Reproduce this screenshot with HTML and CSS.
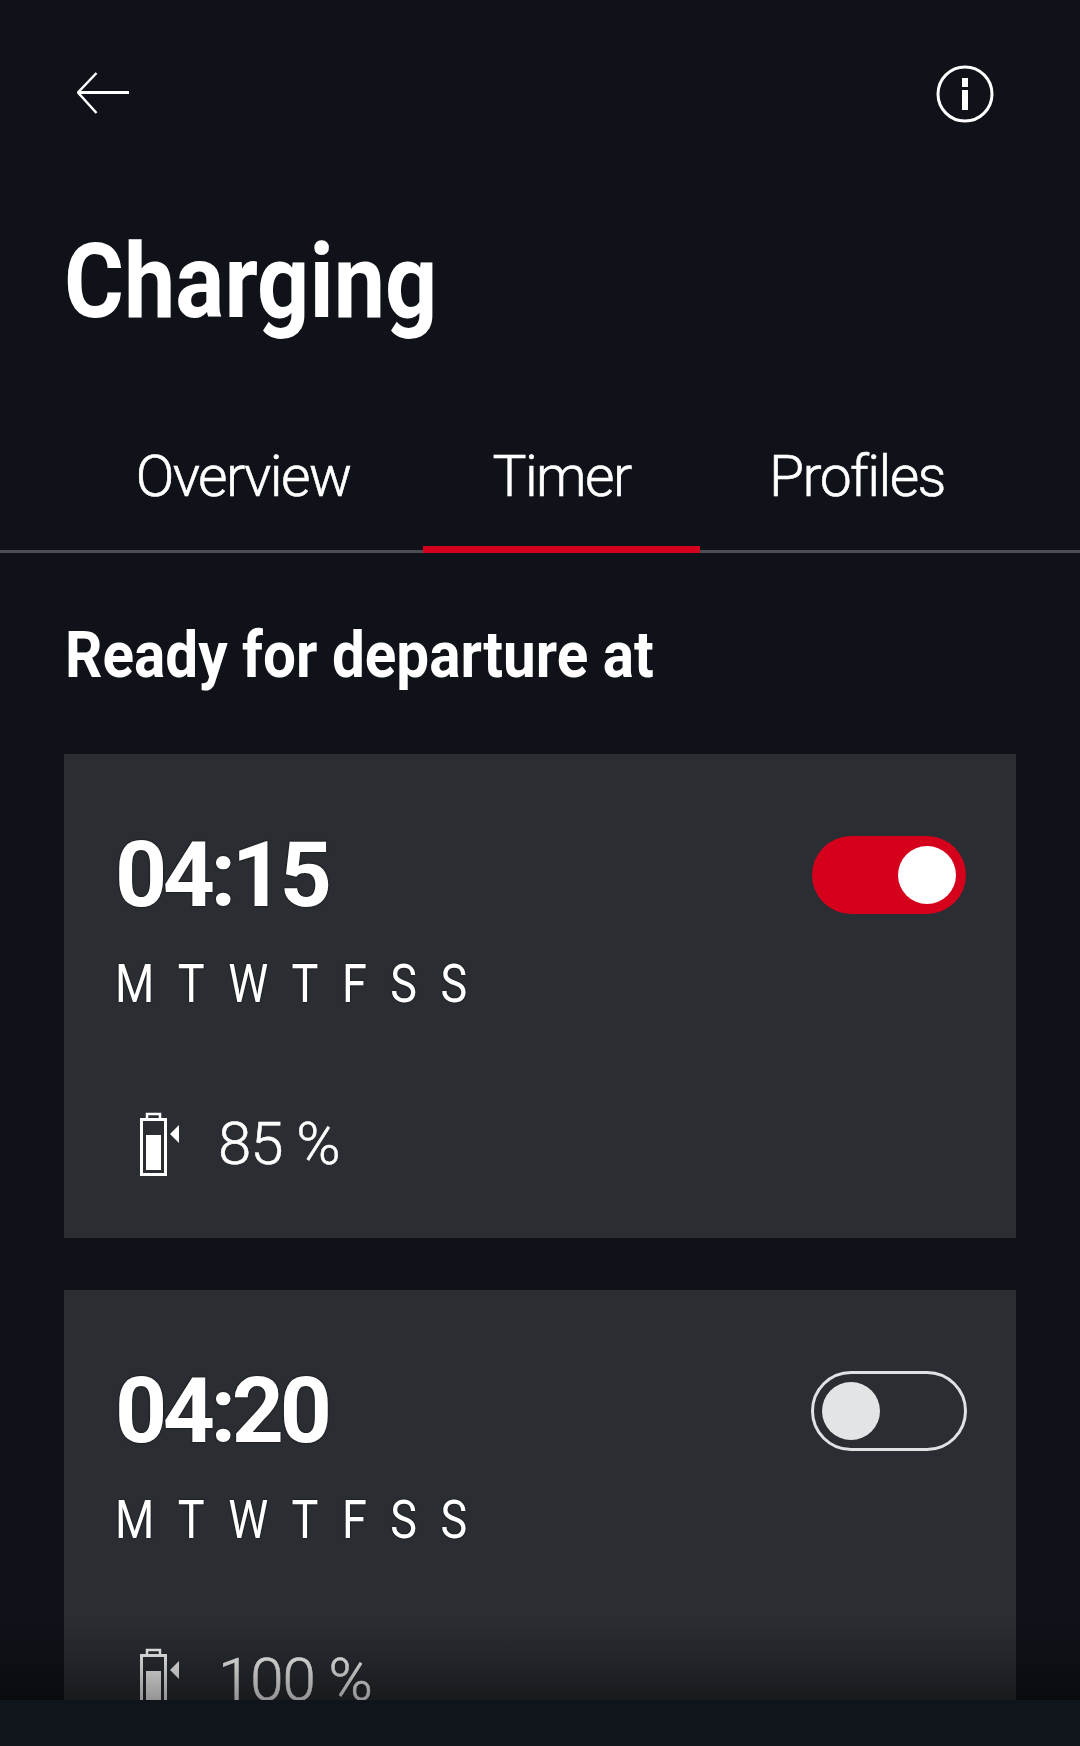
FILE: index.html
```html
<!doctype html>
<html lang="en">
  <head>
    <meta charset="utf-8">
    <meta name="viewport" content="width=device-width, initial-scale=1">
    <title>Charging</title>
    <link rel="stylesheet" href="styles.css">
  </head>
  <body>
    <div class="screen">
      <header class="topbar">
        <svg class="icon-back" width="52" height="42" viewBox="0 0 52 42" fill="none" stroke="#fff">
          <path d="M1 20.5H52" stroke-width="3"/>
          <path d="M19.5 1L1 20.5L19.5 41" stroke-width="2.5"/>
        </svg>
        <svg class="icon-info" width="58" height="58" viewBox="0 0 58 58" fill="none" stroke="#fff">
          <circle cx="29" cy="29" r="27" stroke-width="3"/>
          <path d="M29 13V22M29 25V45" stroke-width="6"/>
        </svg>
      </header>

      <h1 class="title">Charging</h1>

      <nav class="tabs">
        <a class="tab">Overview</a>
        <a class="tab tab-active">Timer</a>
        <a class="tab">Profiles</a>
      </nav>

      <h2 class="section-title">Ready for departure at</h2>

      <section class="timer-card">
        <div class="timer-head">
          <span class="time">04:15</span>
          <span class="switch switch-on"><span class="knob"></span></span>
        </div>
        <div class="days">
          <span>M</span><span>T</span><span>W</span><span>T</span><span>F</span><span>S</span><span>S</span>
        </div>
        <div class="target">
          <svg class="icon-battery" width="40" height="64" viewBox="0 0 40 64" fill="none" stroke="#fff">
            <path d="M7 7V2H20V7" stroke-width="2.5"/>
            <rect x="1.5" y="7.5" width="24" height="55" stroke-width="3"/>
            <rect x="6" y="23" width="15" height="35" fill="#fff" stroke="none"/>
            <path d="M39 13V31L30 22Z" fill="#fff" stroke="none"/>
          </svg>
          <span class="percent">85 %</span>
        </div>
      </section>

      <section class="timer-card">
        <div class="timer-head">
          <span class="time">04:20</span>
          <span class="switch switch-off"><span class="knob"></span></span>
        </div>
        <div class="days">
          <span>M</span><span>T</span><span>W</span><span>T</span><span>F</span><span>S</span><span>S</span>
        </div>
        <div class="target">
          <svg class="icon-battery" width="40" height="64" viewBox="0 0 40 64" fill="none" stroke="#fff">
            <path d="M7 7V2H20V7" stroke-width="2.5"/>
            <rect x="1.5" y="7.5" width="24" height="55" stroke-width="3"/>
            <rect x="6" y="23" width="15" height="35" fill="#fff" stroke="none"/>
            <path d="M39 13V31L30 22Z" fill="#fff" stroke="none"/>
          </svg>
          <span class="percent">100 %</span>
        </div>
      </section>

      <div class="bottom-fade"></div>
      <div class="bottom-bar"></div>
    </div>
  </body>
</html>
```

FILE: styles.css
```css
html, body {
  margin: 0;
  padding: 0;
}
body {
  background-color: #0f1319;
  color: #fff;
  font-family: Roboto, sans-serif;
}
.screen {
  position: relative;
  width: 1080px;
  height: 1746px;
  overflow: hidden;
}
.topbar {
  display: flex;
  justify-content: space-between;
  align-items: flex-start;
  padding: 65px 86px 0 77px;
  height: 58px;
}
.icon-back {
  margin-top: 7px;
}
.title {
  margin: 99px 0 0 64px;
  font-size: 103px;
  line-height: 120px;
  font-weight: 700;
  transform: scaleX(0.89);
  transform-origin: left;
}
.tabs {
  display: grid;
  grid-template-columns: 360px 277px 314px;
  margin-top: 86px;
  padding-left: 63px;
  border-bottom: 3px solid #4b4e52;
  height: 122px;
}
.tab {
  text-align: center;
  font-size: 57px;
  font-weight: 300;
  letter-spacing: -1.6px;
  line-height: 98px;
  -webkit-text-stroke: 0.6px #fff;
}
.tab-active {
  height: 118px;
  border-bottom: 7px solid #d5001c;
}
.section-title {
  margin: 63px 0 0 65px;
  font-size: 64px;
  line-height: 80px;
  font-weight: 700;
  transform: scaleX(0.913);
  transform-origin: left;
}
.timer-card {
  box-sizing: border-box;
  height: 484px;
  margin: 58px 64px 0;
  padding: 82px 50px 0 51px;
  background-color: #2a2e33;
}
.timer-card + .timer-card {
  margin-top: 52px;
}
.timer-head {
  display: flex;
  justify-content: space-between;
  align-items: center;
  height: 78px;
}
.time {
  font-size: 91px;
  line-height: 78px;
  font-weight: 700;
  letter-spacing: -4.4px;
  text-shadow: 0 0 2px #000;
}
.switch {
  box-sizing: border-box;
  display: flex;
  align-items: center;
  width: 154px;
  height: 78px;
  border-radius: 39px;
}
.switch-on {
  justify-content: flex-end;
  padding-right: 10px;
  background-color: #d5001c;
}
.switch-on .knob {
  background-color: #fff;
}
.switch-off {
  width: 156px;
  height: 80px;
  margin: -1px -1px -1px 0;
  padding-left: 8px;
  border: 3px solid #e0e2e3;
  border-radius: 40px;
}
.switch-off .knob {
  background-color: #e3e4e5;
}
.knob {
  width: 58px;
  height: 58px;
  border-radius: 50%;
}
.days {
  display: flex;
  gap: 27.6px;
  margin-top: 40px;
  font-size: 53px;
  line-height: 60px;
  text-shadow: 0 0 2px #000;
  transform: scaleX(0.85);
  transform-origin: left;
}
.target {
  display: flex;
  align-items: center;
  gap: 38px;
  margin-top: 98px;
  padding-left: 25px;
}
.percent {
  font-size: 60px;
  line-height: 64px;
  font-weight: 300;
  letter-spacing: -1px;
  -webkit-text-stroke: 0.5px #fff;
}
.bottom-fade {
  position: absolute;
  left: 0;
  right: 0;
  bottom: 46px;
  height: 80px;
  background: linear-gradient(rgba(0, 0, 0, 0), rgba(0, 0, 0, 0.42));
}
.bottom-bar {
  position: absolute;
  left: 0;
  right: 0;
  bottom: 0;
  height: 46px;
  background-color: #10141b;
}
```
